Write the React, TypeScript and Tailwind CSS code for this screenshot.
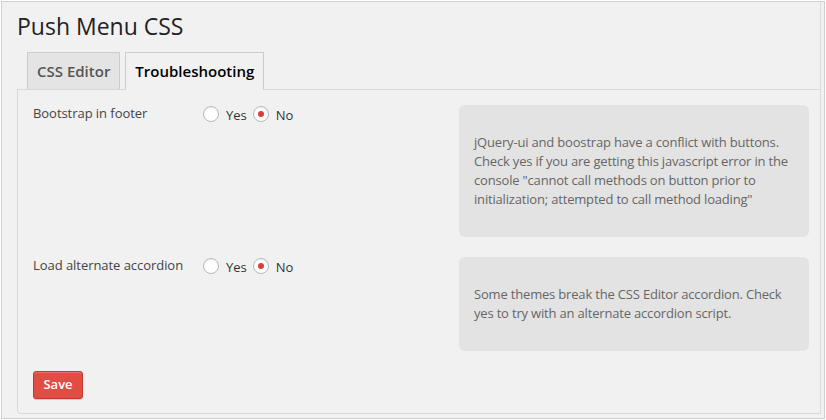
import React from "react";

function Radio({ checked }: { checked?: boolean }) {
  return (
    <span className="mt-[1px] flex h-4 w-4 shrink-0 items-center justify-center rounded-full border border-[#b4b9be] bg-white shadow-[inset_0_1px_2px_rgba(0,0,0,0.07)]">
      {checked && <span className="h-[6px] w-[6px] rounded-full bg-[#dd3d36]" />}
    </span>
  );
}

function YesNo() {
  return (
    <div className="flex items-start">
      <Radio />
      <span className="ml-[7px] mt-[2px] text-[13px] leading-4 text-[#333]">Yes</span>
      <span className="ml-[6px]">
        <Radio checked />
      </span>
      <span className="ml-[7px] mt-[2px] text-[13px] leading-4 text-[#333]">No</span>
    </div>
  );
}

function Row({ label, help }: { label: string; help: React.ReactNode }) {
  return (
    <div className="flex items-start">
      <div className="w-[170px] shrink-0 text-[13px] leading-4 tracking-[-0.05px] text-[#444]">{label}</div>
      <YesNo />
      <div className="ml-auto w-[350px] rounded-[6px] bg-[#e3e3e3] px-[15px] py-[28px] text-[13px] leading-[19px] tracking-[-0.18px] text-[#666]">
        {help}
      </div>
    </div>
  );
}

export default function App() {
  return (
    <div className="h-[420px] w-[826px] bg-white p-[1px] font-['Open_Sans',sans-serif]">
      <div className="h-full w-full border border-[#cfcfcf] bg-[#f1f1f1]">
        <div className="mb-[4px] mr-[3px] flex h-[calc(100%-4px)] flex-col border-r border-[#dcdcdc]">
          <h2 className="ml-[15px] mt-[10px] text-[23px] leading-[29px] font-normal text-[#222]">Push Menu CSS</h2>
          <div className="ml-[25px] mt-[11px] flex items-start gap-[5px]">
            <div className="flex h-[37px] items-center border border-b-0 border-[#ccc] bg-[#e4e4e4] px-[9px] text-[15px] font-semibold text-[#555]">
              CSS Editor
            </div>
            <div className="relative z-10 -mb-px flex h-[38px] items-center border border-b-0 border-[#ccc] bg-[#f1f1f1] px-[9px] pb-px text-[15px] font-semibold text-[#000]">
              Troubleshooting
            </div>
          </div>
          <div className="ml-[15px] flex flex-1 flex-col rounded-bl-[4px] border-b border-l border-t border-[#d8d8d8] pl-[15px] pr-[11px] pt-[15px]">
            <Row
              label="Bootstrap in footer"
              help={
                <>
                  jQuery-ui and boostrap have a conflict with buttons. Check yes if you are getting this javascript error in the console "cannot call methods on button prior to initialization; attempted to call method loading"
                </>
              }
            />
            <div className="mt-[20px]">
              <Row
                label="Load alternate accordion"
                help={<>Some themes break the CSS Editor accordion. Check yes to try with an alternate accordion script.</>}
              />
            </div>
            <div className="mt-[20px]">
              <button className="h-[28px] w-[50px] rounded-[3px] border border-[#c8372d] bg-[#e14d43] text-[13px] font-semibold text-white shadow-[inset_0_1px_0_rgba(255,255,255,0.2),0_1px_0_rgba(0,0,0,0.15)]">
                Save
              </button>
            </div>
          </div>
        </div>
      </div>
    </div>
  );
}
